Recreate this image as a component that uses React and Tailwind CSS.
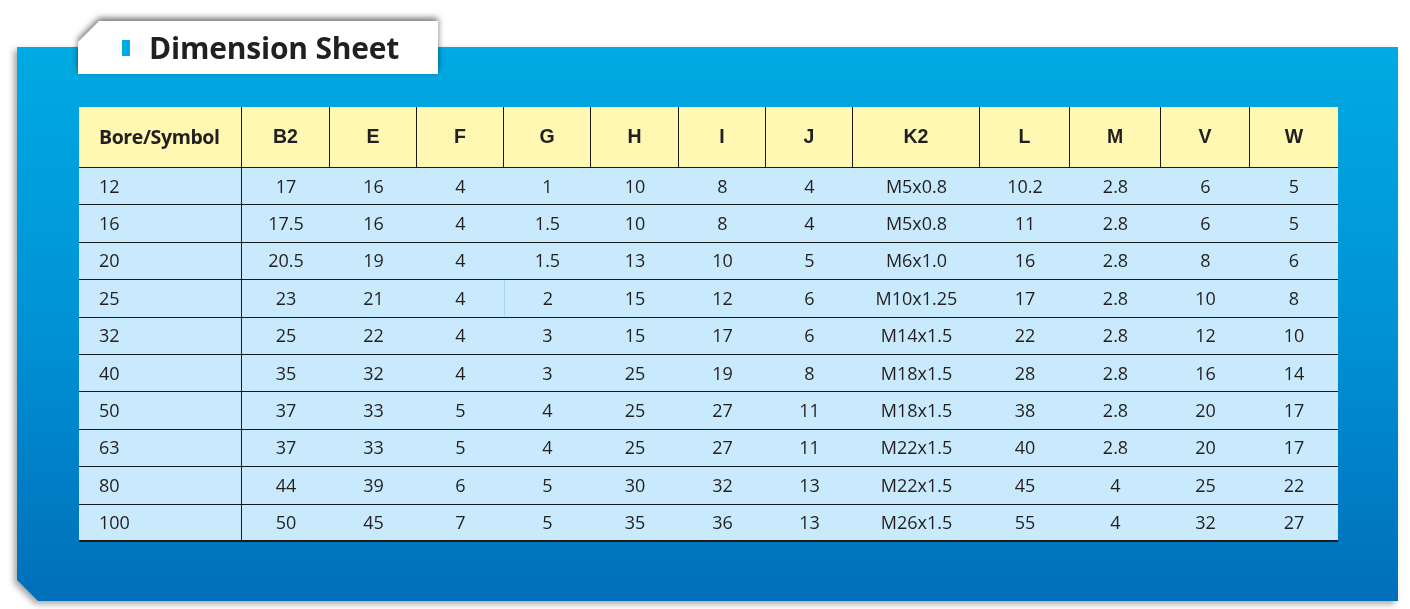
const headers = ["Bore/Symbol", "B2", "E", "F", "G", "H", "I", "J", "K2", "L", "M", "V", "W"];

const rows = [
  ["12", "17", "16", "4", "1", "10", "8", "4", "M5x0.8", "10.2", "2.8", "6", "5"],
  ["16", "17.5", "16", "4", "1.5", "10", "8", "4", "M5x0.8", "11", "2.8", "6", "5"],
  ["20", "20.5", "19", "4", "1.5", "13", "10", "5", "M6x1.0", "16", "2.8", "8", "6"],
  ["25", "23", "21", "4", "2", "15", "12", "6", "M10x1.25", "17", "2.8", "10", "8"],
  ["32", "25", "22", "4", "3", "15", "17", "6", "M14x1.5", "22", "2.8", "12", "10"],
  ["40", "35", "32", "4", "3", "25", "19", "8", "M18x1.5", "28", "2.8", "16", "14"],
  ["50", "37", "33", "5", "4", "25", "27", "11", "M18x1.5", "38", "2.8", "20", "17"],
  ["63", "37", "33", "5", "4", "25", "27", "11", "M22x1.5", "40", "2.8", "20", "17"],
  ["80", "44", "39", "6", "5", "30", "32", "13", "M22x1.5", "45", "4", "25", "22"],
  ["100", "50", "45", "7", "5", "35", "36", "13", "M26x1.5", "55", "4", "32", "27"],
];

const cols = "grid grid-cols-[163px_88px_87px_87px_87px_88px_87px_87px_127px_90px_91px_89px_88px]";

export default function App() {
  return (
    <div className="w-[1410px] h-[609px] bg-white pl-[17px] pt-[47px] font-['Open_Sans',sans-serif] text-[#231f20]">
      <div className="relative w-[1381px]">
        <div className="drop-shadow-[-3px_3px_3px_rgba(0,0,0,0.35)]">
          <div className="h-[554px] bg-linear-to-b from-[#00aae2] via-[#0093d4] to-[#006fba] pl-[62px] pt-[60px] [clip-path:polygon(0_0,100%_0,100%_100%,21px_100%,0_calc(100%_-_21px))]">
            <div className="w-[1259px]">
              <div className={`${cols} h-[61px] bg-[#fff8b2] border-b border-[#1a1a1a]`}>
                {headers.map((h, i) => (
                  <div
                    key={h}
                    className={`flex items-center font-bold ${i === 0 ? "pl-[20px] text-[19.5px] font-['Open_Sans',sans-serif] tracking-[-0.4px]" : "justify-center text-[19.5px] font-['Liberation_Sans',sans-serif]"} ${i < headers.length - 1 ? "border-r border-[#1a1a1a]" : ""}`}
                  >
                    {h}
                  </div>
                ))}
              </div>
              {rows.map((r, ri) => (
                <div
                  key={r[0]}
                  className={`${cols} h-[37.4px] bg-[#c8eafc] ${ri === rows.length - 1 ? "border-b-2" : "border-b"} border-[#1a1a1a]`}
                >
                  {r.map((v, ci) => (
                    <div
                      key={ci}
                      className={`flex items-center text-[18px] ${ci === 0 ? "pl-[20px] border-r border-[#1a1a1a]" : "justify-center"} ${ri === 3 && ci === 4 ? "border-l border-[#a9d5ee]" : ""}`}
                    >
                      {v}
                    </div>
                  ))}
                </div>
              ))}
            </div>
          </div>
        </div>

        <div className="absolute left-[61px] top-[-26px] drop-shadow-[0_-3px_3px_rgba(0,0,0,0.55)]">
          <div className="flex h-[53px] w-[360px] items-center gap-[19px] bg-white pl-[44px] [clip-path:polygon(21px_0,100%_0,100%_100%,0_100%,0_21px)]">
            <span className="h-[16px] w-[8px] bg-[#00a8e0]" />
            <span className="text-[30px] font-bold leading-none tracking-[-0.2px]">Dimension Sheet</span>
          </div>
        </div>
      </div>
    </div>
  );
}
